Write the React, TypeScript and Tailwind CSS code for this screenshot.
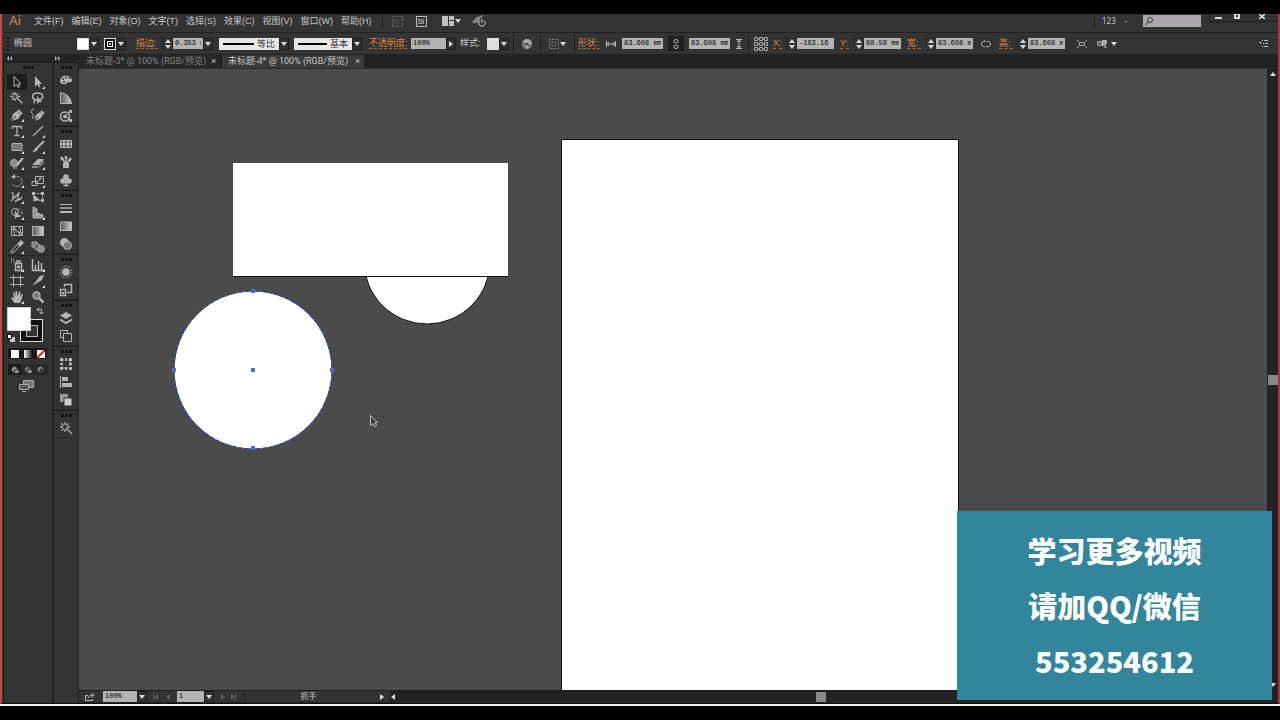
import React from "react";

const Glyph = ({ children, size = "size-[14px]" }: { children: React.ReactNode; size?: string }) => (
  <svg viewBox="0 0 14 14" className={`${size} shrink-0`} fill="none" stroke="#b4b4b4" strokeWidth="1">
    {children}
  </svg>
);

const F = "#b4b4b4";

const Caret = () => (
  <svg viewBox="0 0 6 4" className="h-[4px] w-[6px]" fill="#dcdcdc">
    <path d="M0 0h6L3 4z" />
  </svg>
);

const DropButton = ({ label, side = false }: { label: string; side?: boolean }) => (
  <button
    aria-label={label}
    className="flex h-[12px] w-[10px] shrink-0 items-center justify-center border border-[#1d1d1d] bg-[#303030]"
  >
    {side ? (
      <svg viewBox="0 0 4 6" className="h-[6px] w-[4px]" fill="#dcdcdc">
        <path d="M0 0v6l4-3z" />
      </svg>
    ) : (
      <Caret />
    )}
  </button>
);

const Spinner = ({ label }: { label: string }) => (
  <button
    aria-label={label}
    className="flex h-[12px] w-[11px] shrink-0 items-center justify-center border border-[#262626]"
  >
    <svg viewBox="0 0 6 10" className="h-[10px] w-[6px]" fill="#d4d4d4">
      <path d="M0 4h6L3 0zM0 6h6l-3 4z" />
    </svg>
  </button>
);

const Field = ({ id, value, width, label }: { id: string; value: string; width: string; label?: string }) => (
  <input
    id={id}
    aria-label={label}
    defaultValue={value}
    className={`h-[11px] ${width} shrink-0 bg-[#b3b3b3] px-[2px] font-['Liberation_Mono',monospace] text-[7px] leading-[11px] text-black outline-none`}
  />
);

const Orange = ({ htmlFor, text, width }: { htmlFor: string; text: string; width: string }) => (
  <label
    htmlFor={htmlFor}
    className={`${width} shrink-0 overflow-hidden border-b border-dashed border-[#a4683a] leading-[10px] whitespace-nowrap text-[#dc8640]`}
  >
    {text}
  </label>
);

const Rule = () => <div className="h-[20px] w-px shrink-0 bg-[#222]" />;

const Grip = () => (
  <div className="flex h-[8px] items-center justify-center gap-px">
    <i className="size-[3px] bg-[#141414]" />
    <i className="size-[3px] bg-[#141414]" />
    <i className="size-[3px] bg-[#141414]" />
  </div>
);

const menus = ["文件(F)", "编辑(E)", "对象(O)", "文字(T)", "选择(S)", "效果(C)", "视图(V)", "窗口(W)", "帮助(H)"];

const MenuBar = () => (
  <header className="flex h-[19px] shrink-0 items-start border-b border-[#222] pl-[6px]">
    <span className="w-[25px] font-['Open_Sans',sans-serif] text-[13px] leading-[13px] font-semibold text-[#b07a52]">Ai</span>
    <nav className="flex gap-[8px] leading-[14px]">
      {menus.map((m) => (
        <button key={m} className="whitespace-nowrap">
          {m}
        </button>
      ))}
    </nav>
    <div className="ml-[10px] flex h-[14px] items-center">
      <div className="h-[12px] w-px bg-[#262626]" />
      <button className="ml-[9px] h-[11px] w-[11px] border border-[#555] text-[7px] leading-[9px] text-[#585858]">
        Br
      </button>
      <button className="ml-[13px] h-[11px] w-[11px] border border-[#bbb] text-[7px] leading-[9px] text-[#ddd]">
        St
      </button>
      <button aria-label="排列文档" className="ml-[15px] flex items-center gap-px">
        <svg viewBox="0 0 12 10" className="h-[10px] w-[12px]" fill="#c0c0c0">
          <path d="M0 0h6v10H0zM7 0h5v4H7zM7 5h5v5H7z" />
        </svg>
        <Caret />
      </button>
      <button aria-label="GPU 性能" className="ml-[11px]">
        <svg viewBox="0 0 14 12" className="h-[12px] w-[14px]" fill="none" stroke="#aaa">
          <path d="M0 7 5 2l7-2-4 4-2 4-2-1-1 2z" fill="#888" stroke="none" />
          <path d="M8 5.500a3.200 3.200 0 1 0 4 0M10 4v4" stroke="#ccc" />
        </svg>
      </button>
    </div>
    <div className="ml-auto flex items-start">
      <button className="flex h-[14px] w-[41px] items-center justify-between border-l border-[#262626] pl-[7px] pr-[8px] font-['Noto_Sans',sans-serif] text-[8px]">
        123 <span>-</span>
      </button>
      <label className="mt-px ml-[8px] flex h-[12px] w-[58px] items-center bg-[#aba8ac] pl-[2px]">
        <svg viewBox="0 0 8 9" className="h-[9px] w-[8px] shrink-0" fill="none" stroke="#333">
          <circle cx="5" cy="3" r="2.500" />
          <path d="M3.200 5 0 8.500" />
        </svg>
        <input aria-label="搜索" className="w-full outline-none" />
      </label>
      <div className="ml-[8px] flex h-[8px] border-b border-[#1c1c1c]">
        <button aria-label="最小化" className="flex h-[8px] w-[18px] items-center justify-center border-l border-[#1c1c1c]">
          <i className="h-[2px] w-[7px] bg-[#ddd]" />
        </button>
        <button aria-label="最大化" className="flex h-[8px] w-[19px] justify-center">
          <i className="h-[5px] w-[6px] border-2 border-t border-[#ddd]" />
        </button>
        <button aria-label="关闭" className="flex h-[8px] w-[32px] justify-center">
          <svg viewBox="0 0 6 5" className="h-[5px] w-[6px]" stroke="#e4e4e4" strokeWidth="1.500">
            <path d="M0 0l6 5M6 0L0 5" />
          </svg>
        </button>
      </div>
    </div>
  </header>
);

const StrokePreview = ({ text, width }: { text: string; width: string }) => (
  <div className="flex shrink-0">
    <button className={`flex h-[12px] ${width} items-center gap-[3px] bg-[#e8e8e8] px-[4px] leading-[12px] whitespace-nowrap text-[#333]`}>
      <i className="h-[2px] flex-1 bg-black" />
      {text}
    </button>
    <DropButton label={text} />
  </div>
);

const OptionsBar = () => (
  <section className="flex h-[22px] shrink-0 items-center border-b border-[#222] pl-[4px]">
    <div className="h-[14px] w-[2px] border-l-2 border-dotted border-[#161616]" />
    <span className="ml-[5px] w-[63px]">椭圆</span>
    <button aria-label="填色" className="size-[12px] shrink-0 border border-[#ddd] bg-white" />
    <DropButton label="填色选项" />
    <button aria-label="描边颜色" className="ml-[5px] flex size-[12px] shrink-0 items-center justify-center border border-[#ddd] bg-[#111]">
      <i className="flex size-[6px] items-center justify-center border border-white">
        <i className="size-[2px] bg-[#bbb]" />
      </i>
    </button>
    <DropButton label="描边选项" />
    <div className="ml-[10px] flex shrink-0 items-center">
      <Orange htmlFor="weight" text="描边:" width="w-[22px]" />
      <div className="w-[4px]" />
      <Spinner label="描边粗细" />
      <Field id="weight" value="0.353 mm" width="w-[30px]" />
      <DropButton label="粗细选项" />
    </div>
    <div className="ml-[6px] flex shrink-0 gap-[5px]">
      <StrokePreview text="等比" width="w-[60px]" />
      <StrokePreview text="基本" width="w-[58px]" />
    </div>
    <div className="ml-[7px] flex shrink-0 items-center">
      <Orange htmlFor="opacity" text="不透明度:" width="w-[38px]" />
      <div className="w-[4px]" />
      <Field id="opacity" value="100%" width="w-[35px]" />
      <DropButton label="不透明度选项" side />
      <span className="ml-[4px] w-[27px] shrink-0">样式:</span>
      <button aria-label="图形样式" className="size-[12px] shrink-0 bg-[#dedede]" />
      <DropButton label="样式选项" />
    </div>
    <div className="ml-[4px] flex shrink-0 items-center gap-[8px]">
      <Rule />
      <button aria-label="重新着色图稿">
        <svg viewBox="0 0 10 10" className="size-[10px]">
          <circle cx="5" cy="5" r="5" fill="#aaa" />
          <path d="M5 5 1 2a5 5 0 0 0 2 7.500zM5 5l2 4.500A5 5 0 0 0 10 5z" fill="#777" />
          <path d="M3.500 3.500l3 3M6.500 3.500l-3 3" stroke="#3a3a3a" />
        </svg>
      </button>
      <Rule />
      <button aria-label="对齐" className="flex items-center gap-px">
        <svg viewBox="0 0 10 10" className="size-[10px]" fill="none" stroke="#aaa" strokeDasharray="1 1.500">
          <path d="M.5.500h9v9h-9zM3 3h4v4H3z" />
        </svg>
        <Caret />
      </button>
      <Rule />
    </div>
    <div className="ml-[3px] flex shrink-0 items-center">
      <Orange htmlFor="shape-w" text="形状:" width="w-[22px]" />
      <svg viewBox="0 0 10 6" className="mx-[6px] h-[6px] w-[10px]" stroke="#bbb" fill="none">
        <path d="M.5 0v6M9.500 0v6M1 3h8M3 1 1.500 3 3 5M7 1l1.500 2L7 5" />
      </svg>
      <Field id="shape-w" value="83.608 mm" width="w-[41px]" />
      <button aria-label="约束比例" className="mx-[5px] flex h-[15px] w-[16px] items-center justify-center bg-[#1f1f1f]">
        <svg viewBox="0 0 6 10" className="h-[10px] w-[6px]" fill="none" stroke="#bbb">
          <path d="M1 4V2q0-1.500 2-1.500T5 2v2M1 6v2q0 1.500 2 1.500T5 8V6M3 3v4" />
        </svg>
      </button>
      <Field id="shape-h" label="形状高度" value="83.608 mm" width="w-[41px]" />
      <svg viewBox="0 0 6 10" className="mx-[6px] h-[10px] w-[6px]" stroke="#bbb" fill="none">
        <path d="M0 .5h6M0 9.500h6M3 1v8M1 3l2-2 2 2M1 7l2 2 2-2" />
      </svg>
      <Rule />
      <button aria-label="参考点" className="mx-[5px]">
        <svg viewBox="0 0 14 14" className="size-[14px]" fill="none" stroke="#a8a8a8">
          <path d="M.5.500h3v3h-3zM5.500.500h3v3h-3zM10.500.500h3v3h-3zM.5 5.500h3v3h-3zM5.500 5.500h3v3h-3zM10.500 5.500h3v3h-3zM.5 10.500h3v3h-3zM5.500 10.500h3v3h-3zM10.500 10.500h3v3h-3zM4 2h1M9 2h1M4 7h1M9 7h1M4 12h1M9 12h1" />
        </svg>
      </button>
    </div>
    <div className="flex shrink-0 items-center">
      <Orange htmlFor="pos-x" text="X:" width="w-[9px]" />
      <div className="w-[4px]" />
      <Spinner label="X 值" />
      <Field id="pos-x" value="-163.16 mm" width="w-[37px]" />
      <div className="w-[6px]" />
      <Orange htmlFor="pos-y" text="Y:" width="w-[9px]" />
      <div className="w-[4px]" />
      <Spinner label="Y 值" />
      <Field id="pos-y" value="80.59 mm" width="w-[37px]" />
      <div className="w-[6px]" />
      <Orange htmlFor="size-w" text="宽:" width="w-[14px]" />
      <div className="w-[4px]" />
      <Spinner label="宽度值" />
      <Field id="size-w" value="83.608 mm" width="w-[37px]" />
      <button aria-label="链接宽高" className="mx-[8px]">
        <svg viewBox="0 0 10 8" className="h-[8px] w-[10px]" fill="none" stroke="#aaa">
          <path d="M4 1.500H2.500q-2 0-2 2.500t2 2.500H4M6 1.500h1.500q2 0 2 2.500t-2 2.500H6M4 0v2M6 6v2" />
        </svg>
      </button>
      <Orange htmlFor="size-h" text="高:" width="w-[14px]" />
      <div className="w-[4px]" />
      <Spinner label="高度值" />
      <Field id="size-h" value="83.608 mm" width="w-[37px]" />
    </div>
    <div className="ml-[12px] flex shrink-0 items-center gap-[10px]">
      <button aria-label="变换">
        <svg viewBox="0 0 10 10" className="size-[10px]" fill="none" stroke="#aaa">
          <path d="M2.500 3.500h5v3h-5zM0 1l2 2M10 1 8 3M0 9l2-2M10 9 8 7" />
        </svg>
      </button>
      <button aria-label="隔离选中的对象" className="flex items-center gap-[3px]">
        <svg viewBox="0 0 11 9" className="h-[9px] w-[11px]">
          <path d="M.5 2.500h4v4h-4z" fill="#666" stroke="#999" />
          <path d="M5 1h5v4L8 6l2 3H8L6.500 6.500 5 8z" fill="#aaa" />
        </svg>
        <Caret />
      </button>
    </div>
    <button aria-label="面板菜单" className="mr-[10px] ml-auto">
      <svg viewBox="0 0 9 7" className="h-[7px] w-[9px]" fill="#bbb">
        <path d="M0 2h3L1.500 4zM3 0h1v1H3zM5 0h4v1H5zM4 3h1v1H4zM6 3h3v1H6zM3 6h1v1H3zM5 6h4v1H5z" />
      </svg>
    </button>
  </section>
);

const Corner = () => <path d="M14 11v3h-3z" fill="#ddd" stroke="none" />;

const toolGroups: { name: string; more?: boolean; art: React.ReactNode }[][] = [
  [
    { name: "选择工具", art: <path d="M4 1.500v10l2.500-2 1.500 3 1.500-.7L8 9h3z" /> },
    { name: "直接选择工具", more: true, art: <path d="M4 1v10.500l2.500-2L8 12.500l1.500-.7L8 9h3z" fill={F} stroke="none" /> },
    { name: "魔棒工具", art: <path d="M6 6l6.500 6.500M5 1v3M5 7v3M.5 5.500h3M7 5.500h3M2 2l2 2M8 2.500 6 4.500M2 9l2-2" strokeWidth="1.300" /> },
    { name: "套索工具", art: <><path d="M6 9C0 9 0 2 6.500 2S13 8 9 8.500M4 9q-2 2 0 3" strokeWidth="1.500" /><path d="M6 5v8l2-2h3z" fill={F} stroke="none" /></> },
  ],
  [
    { name: "钢笔工具", more: true, art: <><path d="M1 13 3 6l4-3 4 4-3 4z" fill={F} stroke="none" /><path d="M8 2l4 4" strokeWidth="2" /><path d="M1 13l5-5" stroke="#333" /></> },
    { name: "曲率工具", art: <><path d="M3 13 5 7l4-3 3 3-3 4z" fill={F} stroke="none" /><path d="M10 3l3 3" strokeWidth="2" /><path d="M1 11q3-4 0-6t2-4" /><path d="M3 13l4-4" stroke="#333" /></> },
    { name: "文字工具", more: true, art: <path d="M2.500 5V2.500h9V5M7 2.500v9M4.500 11.500h5" strokeWidth="1.300" /> },
    { name: "直线段工具", more: true, art: <path d="M2 12 12 2" strokeWidth="1.300" /> },
    { name: "矩形工具", more: true, art: <path d="M2 3.500h10v7H2z" fill="#777" /> },
    { name: "画笔工具", more: true, art: <><path d="M13 1 6 8" strokeWidth="2" /><path d="M7 8q0 4-6 4 2-1 2.500-3T7 8z" fill={F} stroke="none" /></> },
    { name: "斑点画笔工具", more: true, art: <><circle cx="4" cy="7" r="3.500" fill="#888" /><path d="M13 2 6 10" strokeWidth="2.200" /><path d="M3 12h4" /></> },
    { name: "橡皮擦工具", more: true, art: <><path d="M1 9l6-6h6L8 9z" fill={F} stroke="none" /><path d="M1 10h6v2H1zM8 10l5-6v3l-5 5z" fill="#888" stroke="none" /></> },
  ],
  [
    { name: "旋转工具", more: true, art: <><path d="M4 3.500a5 5 0 1 1-1.500 6" strokeDasharray="2 1" /><path d="M5 0v5L1 3z" fill={F} stroke="none" /></> },
    { name: "比例缩放工具", more: true, art: <path d="M4.500 2.500h8v7h-8zM1 7.500h5v4H1zM6 8l4-4M8 4h2v2" /> },
    { name: "宽度工具", more: true, art: <path d="M1 3q3-1 2 3t3 0 3-3-1 5 4-1M1 11l6-6M5 12q2-3 6-3" strokeWidth="1.300" /> },
    { name: "自由变换工具", art: <><path d="M2.500 3.500h9v7h-9z" strokeDasharray="2 1" /><path d="M1 2h3v3H1zM10 2h3v3h-3zM10 9h3v3h-3zM3 5v7l2-2h4z" fill={F} stroke="none" /></> },
    { name: "形状生成器工具", more: true, art: <><circle cx="5" cy="6" r="3.500" /><circle cx="8.500" cy="6.500" r="3.500" strokeDasharray="1.500 1" /><path d="M5 5v8l2-2h4z" fill={F} stroke="none" /></> },
    { name: "透视网格工具", more: true, art: <><path d="M2 1l4 2v9H2zM6 7l6 2v3H6z" fill="#888" /><path d="M2 5h4M2 9h10M9 8v4" /></> },
  ],
  [
    { name: "网格工具", art: <path d="M1.500 2.500h11v9h-11zM1 7q3-5 6 0t6 0M5 2q-3 4 0 10M9 2q3 5 0 10M2 3l4 4M8 7l4 4" /> },
    { name: "渐变工具", art: <rect x="1.500" y="2.500" width="11" height="9" fill="url(#fade)" /> },
    { name: "吸管工具", more: true, art: <><path d="M8 4 2 10l-1 3 3-1 6-6" /><path d="M8 4l3-3 2 2-3 3z" fill={F} strokeWidth="1.500" /></> },
    { name: "混合工具", art: <><path d="M1 2h5v5H1z" fill="#777" /><circle cx="6.500" cy="7" r="3" fill="#555" /><circle cx="10" cy="9" r="3.300" fill="#888" /></> },
  ],
  [
    { name: "符号喷枪工具", more: true, art: <><path d="M5.500 5.500h6v7h-6zM7 5V3h3v2" strokeWidth="1.500" /><path d="M7.500 8h2v2h-2z" fill={F} /><path d="M1 1h1M3 2h1M1 4h1M4 4h1" strokeWidth="1.500" /></> },
    { name: "柱形图工具", more: true, art: <path d="M1.500 1v11.500H13M4.500 12V7M7.500 12V3M10.500 12V5" strokeWidth="1.500" /> },
    { name: "画板工具", art: <path d="M3.500 1v12M10.500 1v12M0 3.500h14M0 10.500h14" /> },
    { name: "切片工具", more: true, art: <path d="M1 12 9 2l4-1-2 5-5 3z" fill={F} stroke="none" /> },
    { name: "抓手工具", more: true, art: <path d="M4.500 13 1 8l1-1 2 1.500-1-6h1.500l1 4V1H7l.5 5.500L9 1.500l1.300.3L10 7l1.500-3.500 1.200.5-1.200 6L10 13z" fill={F} stroke="none" /> },
    { name: "缩放工具", art: <><circle cx="5.500" cy="5.500" r="3.500" fill="#777" strokeWidth="1.300" /><path d="M8 8l4.500 4.500" strokeWidth="2.500" /></> },
  ],
];

const ToolBox = () => (
  <aside className="flex w-[50px] shrink-0 flex-col border-x border-t border-[#202020]">
    <Grip />
    <div className="flex flex-col px-[3px] pt-[3px]">
      {toolGroups.map((group, i) => (
        <div
          key={i}
          className={`grid grid-cols-2 ${i < 4 ? "border-b border-[#262626]" : ""} ${i > 1 ? "pt-px" : ""}`}
        >
          {group.map((tool, j) => (
            <button
              key={tool.name}
              aria-label={tool.name}
              className={`flex h-[16px] w-[20px] items-center justify-center ${i === 0 && j === 0 ? "bg-[#1c1c1c]" : ""}`}
            >
              <Glyph>
                {tool.art}
                {tool.more && <Corner />}
              </Glyph>
            </button>
          ))}
        </div>
      ))}
    </div>
    <div className="relative mx-[3px] mt-[2px] h-[38px]">
      <button aria-label="描边" className="absolute top-[12px] left-[13px] flex size-[23px] items-center justify-center border border-[#ddd] bg-[#111]">
        <i className="size-[12px] border border-[#bbb] bg-[#333]" />
      </button>
      <button aria-label="填色" className="absolute top-0 left-0 size-[24px] border border-[#ccc] bg-white" />
      <svg viewBox="0 0 8 8" className="absolute top-0 left-[29px] size-[8px]" fill="none" stroke="#bbb">
        <path d="M1 2.500h4.500V7M3 .5l-2 2 2 2M3.500 5l2 2 2-2" />
      </svg>
      <svg viewBox="0 0 8 8" className="absolute top-[27px] left-0 size-[8px]">
        <path d="M3 3h5v5H3z" fill="#ccc" />
        <path d="M0 0h5v5H0z" fill="#111" />
        <path d="M1 1h3v3H1z" fill="#fff" />
      </svg>
    </div>
    <div className="mx-[4px] mt-[3px] flex">
      <button aria-label="颜色" className="flex h-[11px] w-[13px] items-center justify-center bg-[#181818]">
        <i className="size-[8px] bg-white" />
      </button>
      <button aria-label="渐变" className="flex h-[11px] w-[13px] items-center justify-center bg-[#181818]">
        <i className="size-[8px] bg-linear-to-r from-white to-[#222]" />
      </button>
      <button aria-label="无" className="flex h-[11px] w-[13px] items-center justify-center bg-[#181818]">
        <svg viewBox="0 0 8 8" className="size-[8px] bg-white" stroke="#d22" strokeWidth="2">
          <path d="M0 8 8 0" />
        </svg>
      </button>
    </div>
    <div className="mx-[4px] mt-[5px] flex bg-[#292929]">
      {["正常绘图", "背面绘图", "内部绘图"].map((name, i) => (
        <button key={name} aria-label={name} className={`flex h-[11px] w-[13px] items-center justify-center ${i === 0 ? "bg-[#1b1b1b]" : ""}`}>
          <svg viewBox="0 0 8 8" className="size-[8px]" stroke="#333">
            <circle cx="3.500" cy="3.500" r="3" fill={i === 1 ? "#777" : "#a0a0a0"} />
            <path d={i === 2 ? "M3 3h3v3H3z" : "M3.500 3.500H8v4H3.500z"} fill={i === 2 ? "#444" : "#909090"} />
          </svg>
        </button>
      ))}
    </div>
    <button aria-label="更改屏幕模式" className="mt-[5px] mr-[4px] self-center">
      <svg viewBox="0 0 15 12" className="h-[12px] w-[15px]" stroke="#aaa">
        <path d="M4.500.500h10v7h-10z" fill="#777" />
        <path d="M.5 4.500h9v5h-9z" fill="#555" />
        <path d="M3 11.500h4" />
      </svg>
    </button>
  </aside>
);

const dockGroups: { name: string; art: React.ReactNode }[][] = [
  [
    { name: "颜色", art: <><path d="M1 8c0-4 4-6 8-5s5 5 3 6-3-1-4 1-7 2-7-2z" fill={F} stroke="none" /><path d="M3 6h2M6 4.500h2M9.500 5h2M4 9h2" stroke="#333" strokeWidth="1.500" /></> },
    { name: "颜色参考", art: <path d="M1.500 1.500v11h11q-1-9-11-11z" fill="url(#fade)" /> },
    { name: "Color Themes", art: <><circle cx="6" cy="7.500" r="4.500" strokeWidth="1.500" /><circle cx="6" cy="7.500" r="1.500" fill={F} /><path d="M6 7.500 12 2M6 7l6 5" /><path d="M10 1h3v3h-3zM10 10h3v3h-3z" fill={F} stroke="none" /></> },
  ],
  [
    { name: "色板", art: <><path d="M1.500 3.500h11v7h-11z" fill="#666" /><path d="M1 7h12M5 3v8M9 3v8" stroke="#ccc" /></> },
    { name: "画笔", art: <><path d="M4 8h6v5H4z" fill={F} stroke="none" /><path d="M6 8 3 3M7 8V1M8 8l3-4" strokeWidth="1.500" /><path d="M2 2l2 3M7 1v3M12 3l-2 3" strokeWidth="2.500" /></> },
    { name: "符号", art: <><circle cx="7" cy="4" r="2.800" fill={F} stroke="none" /><circle cx="4" cy="8" r="2.800" fill={F} stroke="none" /><circle cx="10" cy="8" r="2.800" fill={F} stroke="none" /><path d="M7 6v6M4.500 12.500h5" strokeWidth="1.500" /></> },
  ],
  [
    { name: "描边", art: <><path d="M1 3.500h12" /><path d="M1 7h12" strokeWidth="1.500" /><path d="M1 11h12" strokeWidth="2" /></> },
    { name: "渐变", art: <rect x="1.500" y="3" width="11" height="8.500" fill="url(#fade)" /> },
    { name: "透明度", art: <><circle cx="5.500" cy="5.500" r="4" fill={F} /><circle cx="8.500" cy="8.500" r="4" fill="#777" /></> },
  ],
  [
    { name: "外观", art: <><circle cx="7" cy="7" r="3.500" fill={F} /><circle cx="7" cy="7" r="5.800" strokeDasharray="1.500 1.200" /></> },
    { name: "图形样式", art: <><path d="M5.500 4V1.500h7v8H8M1.500 6.500h5v6h-5z" strokeWidth="1.500" /><path d="M3 9h2v2H3z" fill={F} stroke="none" /></> },
  ],
  [
    { name: "图层", art: <><path d="M7 1l6 3.500L7 8 1 4.500z" fill={F} stroke="none" /><path d="M1 8.500l6 3.500 6-3.500" strokeWidth="2" /></> },
    { name: "画板", art: <><path d="M1.500 1.500h7v7h-7z" /><path d="M4.500 4.500h8v8h-8z" fill="#333" /></> },
  ],
  [
    { name: "变换", art: <><path d="M3 3h8v8H3z" strokeDasharray="2 1" /><path d="M1 1h3v3H1zM6 1h2v3H6zM10 1h3v3h-3zM1 10h3v3H1zM6 10h2v3H6zM10 10h3v3h-3zM1 6h3v2H1zM10 6h3v2h-3z" fill={F} stroke="none" /></> },
    { name: "对齐", art: <><path d="M1.500 1v12" /><path d="M3 2h6v4H3zM3 8h10v4H3z" fill={F} stroke="none" /></> },
    { name: "路径查找器", art: <><path d="M1 1h8v8H1z" fill="#999" stroke="none" /><path d="M5 5h8v8H5z" fill="#ccc" stroke="#333" /></> },
  ],
  [
    { name: "魔棒", art: <path d="M7 7l6 6M6 1v3M1 6h3M8 6h3M2.500 2.500l2 2M9.500 2.500l-2 2M2.500 9.500l2-2M6 8v3" strokeWidth="1.300" /> },
  ],
];

const PanelDock = () => (
  <aside className="flex w-[26px] shrink-0 flex-col border-x border-[#202020]">
    {dockGroups.map((group, i) => (
      <div key={i} className="flex flex-col border-t border-b border-t-[#1c1c1c] border-b-[#2a2a2a]">
        <Grip />
        {group.map((p) => (
          <button key={p.name} aria-label={p.name} className="flex h-[18px] items-center justify-center">
            <Glyph>{p.art}</Glyph>
          </button>
        ))}
      </div>
    ))}
  </aside>
);

const Tabs = () => (
  <div className="flex h-[14px] shrink-0 border-b border-[#2c2c2c] bg-[#212121] font-['Roboto','Noto_Sans_CJK_SC',sans-serif] leading-[13px]">
    <div className="flex w-[143px] shrink-0 items-center justify-between border-r border-[#161616] bg-[#262626] pr-[5px] pl-[7px] text-[#858585]">
      <button className="whitespace-nowrap">未标题-3* @ 100% (RGB/预览)</button>
      <button aria-label="关闭 未标题-3" className="text-[#ccc]">×</button>
    </div>
    <div className="flex w-[142px] shrink-0 items-center justify-between bg-[#3a3a3a] pr-[4px] pl-[6px]">
      <button className="whitespace-nowrap">未标题-4* @ 100% (RGB/预览)</button>
      <button aria-label="关闭 未标题-4">×</button>
    </div>
  </div>
);

// artboard and the shapes lying beside it
const Artwork = () => (
  <svg className="absolute inset-0 size-full">
    <rect x="482.500" y="70.500" width="397" height="600" fill="#fff" stroke="#111" />
    <circle cx="348" cy="192" r="63" fill="#fff" stroke="#111" />
    <rect x="154" y="94" width="275" height="113" fill="#fff" />
    <path d="M154 207.500h275" fill="none" stroke="#111" />
    <circle cx="174" cy="301" r="79" fill="#fff" stroke="#222" />
    <circle cx="174" cy="301" r="79" fill="none" stroke="#5468d8" strokeDasharray="4 2" />
    <g fill="#5568cc">
      <rect x="172" y="220" width="4" height="4" />
      <rect x="172" y="299" width="4" height="4" />
      <rect x="172" y="377" width="4" height="4" />
      <rect x="93" y="299" width="4" height="4" />
      <rect x="251" y="299" width="4" height="4" />
    </g>
    <path d="M291.500 346.500v10l2.500-2 1.500 3 2-1-1.500-3h2.500z" fill="#3c3c3c" stroke="#bbb" />
  </svg>
);

const StatusBar = () => (
  <footer className="flex h-[13px] shrink-0 items-center border-t border-b border-t-[#1b1b1b] border-b-[#222]">
    <button aria-label="共享" className="mx-[6px]">
      <svg viewBox="0 0 10 8" className="h-[8px] w-[10px]" fill="none" stroke="#bbb">
        <path d="M3 2.500H.5v5h7V6M3 5q1-3 5-3M6.500 0 9 2 6.500 4.500" />
      </svg>
    </button>
    <div className="ml-[2px] flex items-center">
      <Field id="zoom" label="缩放" value="100%" width="w-[34px]" />
      <DropButton label="缩放级别" />
    </div>
    <svg viewBox="0 0 18 6" className="mx-[6px] h-[6px] w-[18px]" fill="#5c5c5c">
      <path d="M0 0h1v6H0zM5 0v6L1 3zM17 0v6l-4-3z" />
    </svg>
    <div className="flex items-center">
      <Field id="board" label="画板" value="1" width="w-[27px]" />
      <DropButton label="画板列表" />
    </div>
    <svg viewBox="0 0 18 6" className="mx-[6px] h-[6px] w-[18px]" fill="#5c5c5c">
      <path d="M1 0v6l4-3zM11 0v6l4-3zM15 0h1v6h-1z" />
    </svg>
    <div className="flex h-[11px] w-[146px] shrink-0 items-center border-l border-[#262626]">
      <span className="flex-1 pr-[8px] text-center text-[8px] leading-[11px]">抓手</span>
      <svg viewBox="0 0 4 6" className="mr-[6px] h-[6px] w-[4px]" fill="#ddd">
        <path d="M0 0v6l4-3z" />
      </svg>
    </div>
    <div className="flex h-[11px] flex-1 items-center bg-[#222]">
      <svg viewBox="0 0 4 6" className="ml-px h-[6px] w-[4px]" fill="#ddd">
        <path d="M4 0v6L0 3z" />
      </svg>
      <div className="flex flex-1 justify-center pr-[32px]">
        <i className="h-[10px] w-[10px] bg-[#888]" />
      </div>
    </div>
  </footer>
);

const App = () => {
  return (
    <div className="relative flex h-screen w-full flex-col overflow-hidden bg-black pt-[14px] pb-[14px] font-['Liberation_Sans','Noto_Sans_CJK_SC',sans-serif] text-[9px] text-[#c6c6c6]">
      <svg className="absolute size-0">
        <linearGradient id="fade">
          <stop offset="0" stopColor="#555" />
          <stop offset="1" stopColor="#d0d0d0" />
        </linearGradient>
      </svg>
      <div className="flex min-h-0 flex-1 flex-col border-r-2 border-b border-l-2 border-r-[#b0343a] border-b-[#111] border-l-[#c04a48] bg-[#333334] pl-px">
        <MenuBar />
        <OptionsBar />
        <div className="flex min-h-0 flex-1">
          <div className="flex shrink-0 flex-col">
            <div className="flex h-[7px] items-center bg-[#232323] pl-[4px]">
              <svg viewBox="0 0 56 5" className="h-[5px] w-[56px]" fill="#bbb">
                <path d="M2 0v5L0 2.500zM5 0v5L3 2.500zM48 0v5l2-2.500zM51 0v5l2-2.500z" />
              </svg>
            </div>
            <div className="flex min-h-0 flex-1">
              <ToolBox />
              <PanelDock />
            </div>
          </div>
          <main className="flex min-w-0 flex-1 flex-col">
            <Tabs />
            <div className="flex min-h-0 flex-1">
              <div className="relative flex-1 overflow-hidden bg-[#4b4b4b]">
                <Artwork />
              </div>
              <div className="flex w-[11px] flex-col items-center justify-between bg-[#222] py-[3px]">
                <svg viewBox="0 0 6 4" className="h-[4px] w-[6px]" fill="#ddd">
                  <path d="M0 4h6L3 0z" />
                </svg>
                <i className="size-[10px] bg-[#888]" />
                <Caret />
              </div>
            </div>
            <StatusBar />
          </main>
        </div>
      </div>
      <div className="h-[2px] shrink-0 bg-[#f2f2ea]" />
      <div className="absolute right-[8px] bottom-[20px] flex h-[189px] w-[315px] flex-col items-center bg-[#33859b] pt-[12px] font-['Noto_Sans_CJK_SC',sans-serif] text-[29px] leading-[55px] font-black text-white">
        <p>学习更多视频</p>
        <p>请加QQ/微信</p>
        <p>553254612</p>
      </div>
    </div>
  );
};

export default App;
